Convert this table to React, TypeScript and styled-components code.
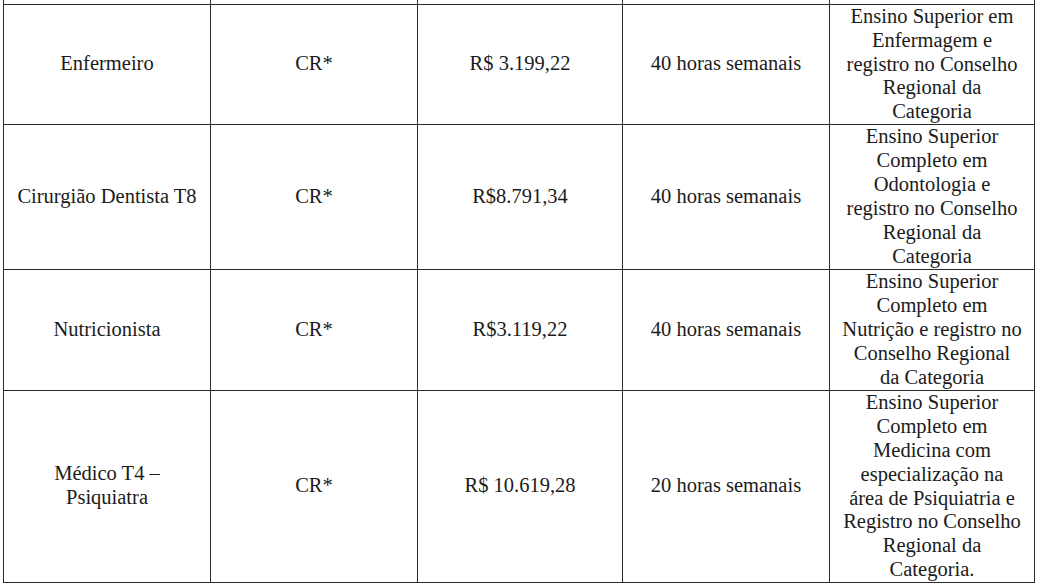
import React from 'react';
import styled, { createGlobalStyle } from 'styled-components';

const GlobalStyle = createGlobalStyle`
    html, body {
        margin:0;
        padding:0;
        background:#ffffff;
    }
`

type Row = {
    cargo: string[];
    vagas: string;
    salario: string;
    carga: string;
    requisitos: string[];
    height: number;
}

const rows: Row[] = [
    {
        cargo: ['Enfermeiro'],
        vagas: 'CR*',
        salario: 'R$ 3.199,22',
        carga: '40 horas semanais',
        requisitos: ['Ensino Superior em', 'Enfermagem e', 'registro no Conselho', 'Regional da', 'Categoria'],
        height: 119,
    },
    {
        cargo: ['Cirurgião Dentista T8'],
        vagas: 'CR*',
        salario: 'R$8.791,34',
        carga: '40 horas semanais',
        requisitos: ['Ensino Superior', 'Completo em', 'Odontologia e', 'registro no Conselho', 'Regional da', 'Categoria'],
        height: 144,
    },
    {
        cargo: ['Nutricionista'],
        vagas: 'CR*',
        salario: 'R$3.119,22',
        carga: '40 horas semanais',
        requisitos: ['Ensino Superior', 'Completo em', 'Nutrição e registro no', 'Conselho Regional', 'da Categoria'],
        height: 120,
    },
    {
        cargo: ['Médico T4 –', 'Psiquiatra'],
        vagas: 'CR*',
        salario: 'R$ 10.619,28',
        carga: '20 horas semanais',
        requisitos: ['Ensino Superior', 'Completo em', 'Medicina com', 'especialização na', 'área de Psiquiatria e', 'Registro no Conselho', 'Regional da', 'Categoria.'],
        height: 191,
    },
]

const Lines = ({ lines }: { lines: string[] }) => (
    <>
        {lines.map((l, i) => (
            <Line key={i}>{l}</Line>
        ))}
    </>
)

const App = () => {
    const template = ['4px', ...rows.map(r => r.height + 'px')].join(' ')
    return (
        <Page>
            <GlobalStyle />
            <Table style={{ gridTemplateRows: template }}>
                {/* cut-off row from the previous page */}
                <Cell />
                <Cell />
                <Cell />
                <Cell />
                <Cell />
                {rows.map((r, i) => (
                    <React.Fragment key={i}>
                        <Cell><Lines lines={r.cargo} /></Cell>
                        <Cell><Line>{r.vagas}</Line></Cell>
                        <Cell><Line>{r.salario}</Line></Cell>
                        <Cell><Line>{r.carga}</Line></Cell>
                        <Cell $tight><Lines lines={r.requisitos} /></Cell>
                    </React.Fragment>
                ))}
            </Table>
        </Page>
    )
}

export default App

const Page = styled.div`
    width:1038px;
    height:587px;
    overflow:hidden;
    background:#ffffff;
    padding-left:3px;
    box-sizing:border-box;
`

const Table = styled.div`
    display:grid;
    grid-template-columns: 206px 206px 204px 206px 204px;
    gap:1px;
    width:1032px;
    box-sizing:border-box;
    padding:0 1px 1px 1px;
    background:#2a2a2a;
`

const Cell = styled.div<{ $tight?: boolean }>`
    background:#ffffff;
    display:flex;
    flex-direction:column;
    align-items:center;
    justify-content:center;
    box-sizing:border-box;
    padding-bottom:${p => (p.$tight ? '0' : '3px')};
    overflow:visible;
    font-family:"Liberation Serif", "Times New Roman", serif;
    font-size:20.5px;
    line-height:${p => (p.$tight ? '23.9px' : '24px')};
    color:#1b1b1b;
    text-align:center;
`

const Line = styled.span`
    display:block;
    white-space:nowrap;
`
